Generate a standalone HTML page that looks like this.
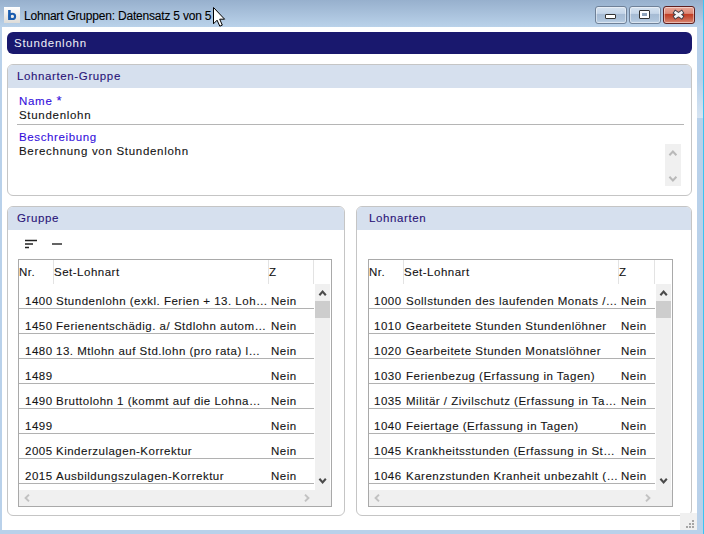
<!DOCTYPE html>
<html><head><meta charset="utf-8">
<style>
*{margin:0;padding:0;box-sizing:border-box}
html,body{width:704px;height:534px;overflow:hidden}
body{position:relative;background:#b9d1ea;font-family:"Liberation Sans",sans-serif;font-size:12px;color:#141414}
.a{position:absolute}
.t{position:absolute;white-space:nowrap;line-height:14px;font-size:11.5px;letter-spacing:0.5px;-webkit-text-stroke:0.1px currentColor}
#title{left:0;top:0;width:704px;height:27px;background:linear-gradient(#97b0cd,#bad2ea)}
#rframe{left:697px;top:27px;width:7px;height:507px;background:#b9d1ea}
#cyan{left:703px;top:0;width:1px;height:534px;background:#3bc4f2}
#content{left:2px;top:27px;width:695px;height:503px;background:#fff}
.btn{position:absolute;top:6px;height:18px;border:1px solid #6f8198;border-radius:3px;background:linear-gradient(#d5e2f0 0,#c5d6e9 40%,#a6bbd4 46%,#adc3db 80%,#c0d3e7 100%);box-shadow:inset 0 0 0 1px rgba(255,255,255,.45)}
.close{background:linear-gradient(#eaa899 0,#dc8a78 40%,#c13d24 46%,#c75a42 70%,#db8874 100%);border-color:#5e1f1f}
.gb{position:absolute;border:1px solid #c5c5c5;border-radius:6px;overflow:hidden;background:#fff}
.gh{position:absolute;left:0;top:0;right:0;height:23px;background:#d6e0ee}
.gt{color:#2a1478;letter-spacing:0.62px}
.lbl{color:#3410dc}
.list{position:absolute;border:1px solid #a9a9a9;background:#fff}
.col{position:absolute;top:0;width:1px;height:24px;background:#e3e3e3}
.sep{position:absolute;height:1px;background:#b1b1b1}
.sb{position:absolute;background:#f0f0f0}
</style></head><body>
<div id="title" class="a"></div>
<div id="rframe" class="a"></div>
<div id="content" class="a"></div>
<div class="a" style="left:697px;top:80px;width:6px;height:38px;background:linear-gradient(#b9d1ea,#d6e4f2)"></div>
<div id="cyan" class="a"></div>

<!-- app icon -->
<div class="a" style="left:4px;top:7px;width:16px;height:16px;background:linear-gradient(#ffffff,#dedcd8)"></div>
<svg class="a" style="left:4px;top:7px" width="16" height="16" viewBox="0 0 16 16">
<rect x="4.1" y="3" width="2.6" height="10" fill="#1a5cae"/>
<ellipse cx="8.3" cy="9.4" rx="2.8" ry="2.6" fill="none" stroke="#1a5cae" stroke-width="2.1"/>
</svg>
<div class="t" style="left:24px;top:9px;font-size:12px;letter-spacing:-0.2px;color:#000">Lohnart Gruppen: Datensatz 5 von 5</div>
<!-- window buttons -->
<div class="btn" style="left:595px;width:32px"></div>
<div class="btn" style="left:629px;width:32px"></div>
<div class="btn close" style="left:663px;width:32px"></div>
<div class="a" style="left:605px;top:14px;width:11px;height:5px;border:1px solid #333;border-radius:1px;background:#fff"></div>
<div class="a" style="left:639px;top:10px;width:11px;height:9px;border:1px solid #333;border-radius:1px;background:#fff"></div>
<div class="a" style="left:642px;top:13px;width:5px;height:3px;background:#8fa3bb"></div>
<svg class="a" style="left:663px;top:6px" width="32" height="18" viewBox="0 0 32 18">
<path d="M12.6 6.6 L18.4 10.6 M18.4 6.6 L12.6 10.6" stroke="#3c3c44" stroke-width="4.4" stroke-linecap="square"/>
<path d="M12.6 6.6 L18.4 10.6 M18.4 6.6 L12.6 10.6" stroke="#f4f4f4" stroke-width="2.6" stroke-linecap="square"/>
</svg>

<!-- dark bar -->
<div class="a" style="left:7px;top:32px;width:685px;height:22px;background:#19186e;border-radius:6px"></div>
<div class="t" style="left:14px;top:36px;color:#f0f0f8;letter-spacing:0.75px;-webkit-text-stroke:0">Stundenlohn</div>

<!-- top group box -->
<div class="gb" style="left:7px;top:64px;width:685px;height:132px">
  <div class="gh"></div>
</div>
<div class="t gt" style="left:17px;top:69px">Lohnarten-Gruppe</div>
<div class="t lbl" style="left:19px;top:94px;letter-spacing:0.7px">Name <span style="font-size:13px">*</span></div>
<div class="t" style="left:19px;top:108px;letter-spacing:0.7px">Stundenlohn</div>
<div class="a" style="left:17px;top:124px;width:667px;height:1px;background:#b5b5b5"></div>
<div class="t lbl" style="left:19px;top:130px;letter-spacing:0.62px">Beschreibung</div>
<div class="t" style="left:19px;top:144px;letter-spacing:0.7px">Berechnung von Stundenlohn</div>
<div class="sb" style="left:665px;top:144px;width:16px;height:42px"></div>
<svg class="a" style="left:665px;top:144px" width="16" height="42" viewBox="0 0 16 42">
<path d="M4.4 11.3 L7.9 7.5 L11.4 11.3" fill="none" stroke="#b9b9b9" stroke-width="2"/>
<path d="M4.4 32.7 L7.9 36.5 L11.4 32.7" fill="none" stroke="#b9b9b9" stroke-width="2"/>
</svg>

<!-- lower left group box -->
<div class="gb" style="left:7px;top:206px;width:338px;height:310px">
  <div class="gh"></div>
</div>
<div class="t gt" style="left:17px;top:211px">Gruppe</div>
<svg class="a" style="left:20px;top:234px" width="50" height="20" viewBox="0 0 50 20">
<path d="M5 6.5 H17 M5 10 H13 M5 13.5 H9" stroke="#222" stroke-width="1.4"/>
<path d="M32 10 H42" stroke="#222" stroke-width="1.4"/>
</svg>

<!-- lower right group box -->
<div class="gb" style="left:356px;top:206px;width:336px;height:310px">
  <div class="gh"></div>
</div>
<div class="t gt" style="left:369px;top:211px">Lohnarten</div>

<!-- resize grip -->
<div class="sb" style="left:680px;top:513px;width:17px;height:17px"></div>
<svg class="a" style="left:680px;top:513px" width="17" height="17" viewBox="0 0 17 17">
<g fill="#a6a6a6"><rect x="12" y="7" width="2" height="2"/><rect x="9" y="10" width="2" height="2"/><rect x="12" y="10" width="2" height="2"/><rect x="6" y="13" width="2" height="2"/><rect x="9" y="13" width="2" height="2"/><rect x="12" y="13" width="2" height="2"/></g>
</svg>

<div class="list" style="left:18px;top:259px;width:314px;height:248px"></div>
<div class="col" style="left:53px;top:260px"></div>
<div class="col" style="left:268px;top:260px"></div>
<div class="col" style="left:313px;top:260px"></div>
<div class="t" style="left:19px;top:265px">Nr.</div>
<div class="t" style="left:54px;top:265px">Set-Lohnart</div>
<div class="t" style="left:269px;top:265px">Z</div>
<div class="t" style="left:25px;top:294px">1400</div>
<div class="t" style="left:56px;top:294px">Stundenlohn (exkl. Ferien + 13. Loh…</div>
<div class="t" style="left:271px;top:294px">Nein</div>
<div class="sep" style="left:19px;top:308px;width:295px"></div>
<div class="t" style="left:25px;top:319px">1450</div>
<div class="t" style="left:56px;top:319px">Ferienentschädig. a/ Stdlohn autom…</div>
<div class="t" style="left:271px;top:319px">Nein</div>
<div class="sep" style="left:19px;top:333px;width:295px"></div>
<div class="t" style="left:25px;top:344px">1480</div>
<div class="t" style="left:56px;top:344px">13. Mtlohn auf Std.lohn (pro rata) l…</div>
<div class="t" style="left:271px;top:344px">Nein</div>
<div class="sep" style="left:19px;top:358px;width:295px"></div>
<div class="t" style="left:25px;top:369px">1489</div>
<div class="t" style="left:271px;top:369px">Nein</div>
<div class="sep" style="left:19px;top:383px;width:295px"></div>
<div class="t" style="left:25px;top:394px">1490</div>
<div class="t" style="left:56px;top:394px">Bruttolohn 1 (kommt auf die Lohna…</div>
<div class="t" style="left:271px;top:394px">Nein</div>
<div class="sep" style="left:19px;top:408px;width:295px"></div>
<div class="t" style="left:25px;top:419px">1499</div>
<div class="t" style="left:271px;top:419px">Nein</div>
<div class="sep" style="left:19px;top:433px;width:295px"></div>
<div class="t" style="left:25px;top:444px">2005</div>
<div class="t" style="left:56px;top:444px">Kinderzulagen-Korrektur</div>
<div class="t" style="left:271px;top:444px">Nein</div>
<div class="sep" style="left:19px;top:458px;width:295px"></div>
<div class="t" style="left:25px;top:469px">2015</div>
<div class="t" style="left:56px;top:469px">Ausbildungszulagen-Korrektur</div>
<div class="t" style="left:271px;top:469px">Nein</div>
<div class="sep" style="left:19px;top:483px;width:295px"></div>
<div class="sb" style="left:315px;top:284px;width:15px;height:206px"></div>
<div class="a" style="left:315px;top:301px;width:15px;height:17px;background:#cdcdcd"></div>
<div class="sb" style="left:19px;top:490px;width:312px;height:16px"></div>
<svg class="a" style="left:315px;top:284px" width="16" height="206" viewBox="0 0 16 206"><path d="M4.4 11.2 L7.6 7.6 L10.8 11.2" fill="none" stroke="#4a4a4a" stroke-width="2.1"/><path d="M4.4 194.8 L7.6 198.4 L10.8 194.8" fill="none" stroke="#4a4a4a" stroke-width="2.1"/></svg>
<svg class="a" style="left:19px;top:490px" width="312" height="16" viewBox="0 0 312 16"><path d="M10 4.6 L6.6 8 L10 11.4" fill="none" stroke="#c2c2c2" stroke-width="2"/><path d="M286 4.6 L289.4 8 L286 11.4" fill="none" stroke="#c2c2c2" stroke-width="2"/></svg>
<div class="list" style="left:368px;top:259px;width:305px;height:248px"></div>
<div class="col" style="left:403px;top:260px"></div>
<div class="col" style="left:618px;top:260px"></div>
<div class="col" style="left:654px;top:260px"></div>
<div class="t" style="left:369px;top:265px">Nr.</div>
<div class="t" style="left:404px;top:265px">Set-Lohnart</div>
<div class="t" style="left:619px;top:265px">Z</div>
<div class="t" style="left:374px;top:294px">1000</div>
<div class="t" style="left:406px;top:294px">Sollstunden des laufenden Monats /…</div>
<div class="t" style="left:621px;top:294px">Nein</div>
<div class="sep" style="left:369px;top:308px;width:286px"></div>
<div class="t" style="left:374px;top:319px">1010</div>
<div class="t" style="left:406px;top:319px">Gearbeitete Stunden Stundenlöhner</div>
<div class="t" style="left:621px;top:319px">Nein</div>
<div class="sep" style="left:369px;top:333px;width:286px"></div>
<div class="t" style="left:374px;top:344px">1020</div>
<div class="t" style="left:406px;top:344px">Gearbeitete Stunden Monatslöhner</div>
<div class="t" style="left:621px;top:344px">Nein</div>
<div class="sep" style="left:369px;top:358px;width:286px"></div>
<div class="t" style="left:374px;top:369px">1030</div>
<div class="t" style="left:406px;top:369px">Ferienbezug (Erfassung in Tagen)</div>
<div class="t" style="left:621px;top:369px">Nein</div>
<div class="sep" style="left:369px;top:383px;width:286px"></div>
<div class="t" style="left:374px;top:394px">1035</div>
<div class="t" style="left:406px;top:394px">Militär / Zivilschutz (Erfassung in Ta…</div>
<div class="t" style="left:621px;top:394px">Nein</div>
<div class="sep" style="left:369px;top:408px;width:286px"></div>
<div class="t" style="left:374px;top:419px">1040</div>
<div class="t" style="left:406px;top:419px">Feiertage (Erfassung in Tagen)</div>
<div class="t" style="left:621px;top:419px">Nein</div>
<div class="sep" style="left:369px;top:433px;width:286px"></div>
<div class="t" style="left:374px;top:444px">1045</div>
<div class="t" style="left:406px;top:444px">Krankheitsstunden (Erfassung in St…</div>
<div class="t" style="left:621px;top:444px">Nein</div>
<div class="sep" style="left:369px;top:458px;width:286px"></div>
<div class="t" style="left:374px;top:469px">1046</div>
<div class="t" style="left:406px;top:469px">Karenzstunden Kranheit unbezahlt (…</div>
<div class="t" style="left:621px;top:469px">Nein</div>
<div class="sep" style="left:369px;top:483px;width:286px"></div>
<div class="sb" style="left:656px;top:284px;width:15px;height:206px"></div>
<div class="a" style="left:656px;top:301px;width:15px;height:17px;background:#cdcdcd"></div>
<div class="sb" style="left:369px;top:490px;width:303px;height:16px"></div>
<svg class="a" style="left:656px;top:284px" width="16" height="206" viewBox="0 0 16 206"><path d="M4.4 11.2 L7.6 7.6 L10.8 11.2" fill="none" stroke="#4a4a4a" stroke-width="2.1"/><path d="M4.4 194.8 L7.6 198.4 L10.8 194.8" fill="none" stroke="#4a4a4a" stroke-width="2.1"/></svg>
<svg class="a" style="left:369px;top:490px" width="303" height="16" viewBox="0 0 303 16"><path d="M10 4.6 L6.6 8 L10 11.4" fill="none" stroke="#c2c2c2" stroke-width="2"/><path d="M277 4.6 L280.4 8 L277 11.4" fill="none" stroke="#c2c2c2" stroke-width="2"/></svg>

<!-- cursor -->
<svg class="a" style="left:212px;top:6px" width="14" height="22" viewBox="0 0 14 22">
<path d="M1.5 1.5 L1.5 17.8 L5.1 14.2 L7.8 20.2 L10.3 19.1 L7.7 13.2 L12.6 13.2 Z" fill="#fff" stroke="#000" stroke-width="1"/>
</svg>
</body></html>
